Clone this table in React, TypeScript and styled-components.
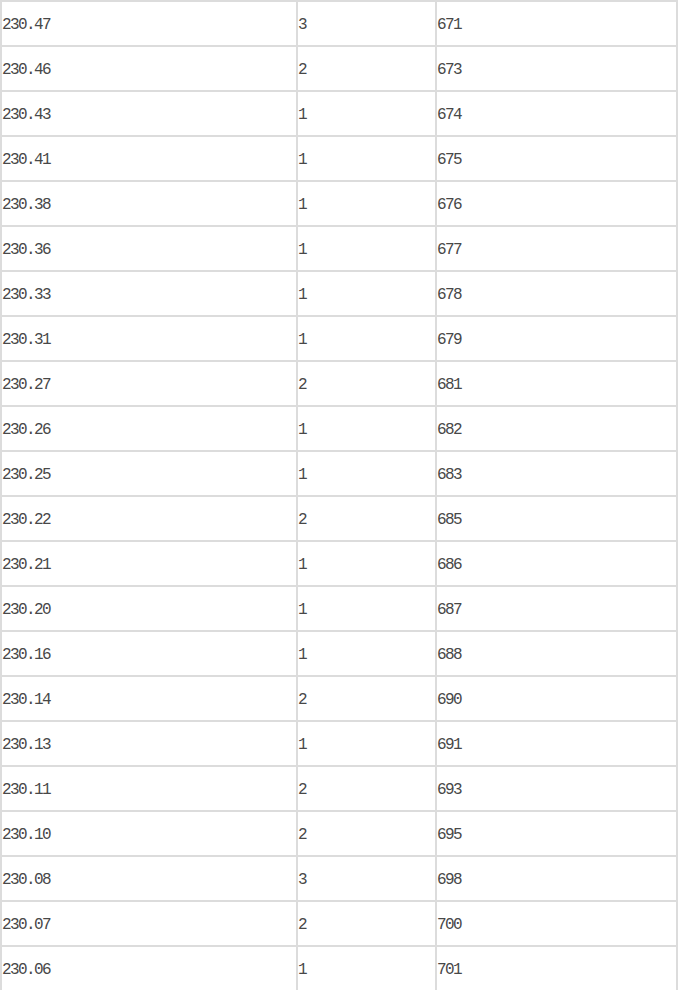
import React from 'react'
import styled, { createGlobalStyle } from 'styled-components'

const GlobalStyle = createGlobalStyle`
    html, body {
        margin: 0;
        padding: 0;
        background: #fff;
    }
`

interface Row {
    price: string
    count: number
    total: number
}

const rows: Row[] = [
    { price: "230.47", count: 3, total: 671 },
    { price: "230.46", count: 2, total: 673 },
    { price: "230.43", count: 1, total: 674 },
    { price: "230.41", count: 1, total: 675 },
    { price: "230.38", count: 1, total: 676 },
    { price: "230.36", count: 1, total: 677 },
    { price: "230.33", count: 1, total: 678 },
    { price: "230.31", count: 1, total: 679 },
    { price: "230.27", count: 2, total: 681 },
    { price: "230.26", count: 1, total: 682 },
    { price: "230.25", count: 1, total: 683 },
    { price: "230.22", count: 2, total: 685 },
    { price: "230.21", count: 1, total: 686 },
    { price: "230.20", count: 1, total: 687 },
    { price: "230.16", count: 1, total: 688 },
    { price: "230.14", count: 2, total: 690 },
    { price: "230.13", count: 1, total: 691 },
    { price: "230.11", count: 2, total: 693 },
    { price: "230.10", count: 2, total: 695 },
    { price: "230.08", count: 3, total: 698 },
    { price: "230.07", count: 2, total: 700 },
    { price: "230.06", count: 1, total: 701 },
]

const Table = styled.table`
    width: 678px;
    border: 1px solid #dcdcdc;
    border-collapse: separate;
    border-spacing: 0;
    table-layout: fixed;
    font-family: "Liberation Mono", "DejaVu Sans Mono", monospace;
    font-size: 16px;
    letter-spacing: -1.6px;
    color: #484848;
`

const Cell = styled.td<{ $w: number }>`
    box-sizing: border-box;
    width: ${props => props.$w}px;
    height: 45px;
    padding: 2px 0 0 0;
    border: 1px solid #dcdcdc;
    vertical-align: middle;
    text-align: left;
    line-height: 20px;
`

export default function App() {
    return (
        <>
            <GlobalStyle />
            <Table>
                <tbody>
                    {rows.map(row => (
                        <tr key={row.price}>
                            <Cell $w={296}>{row.price}</Cell>
                            <Cell $w={139}>{row.count}</Cell>
                            <Cell $w={241}>{row.total}</Cell>
                        </tr>
                    ))}
                </tbody>
            </Table>
        </>
    )
}
